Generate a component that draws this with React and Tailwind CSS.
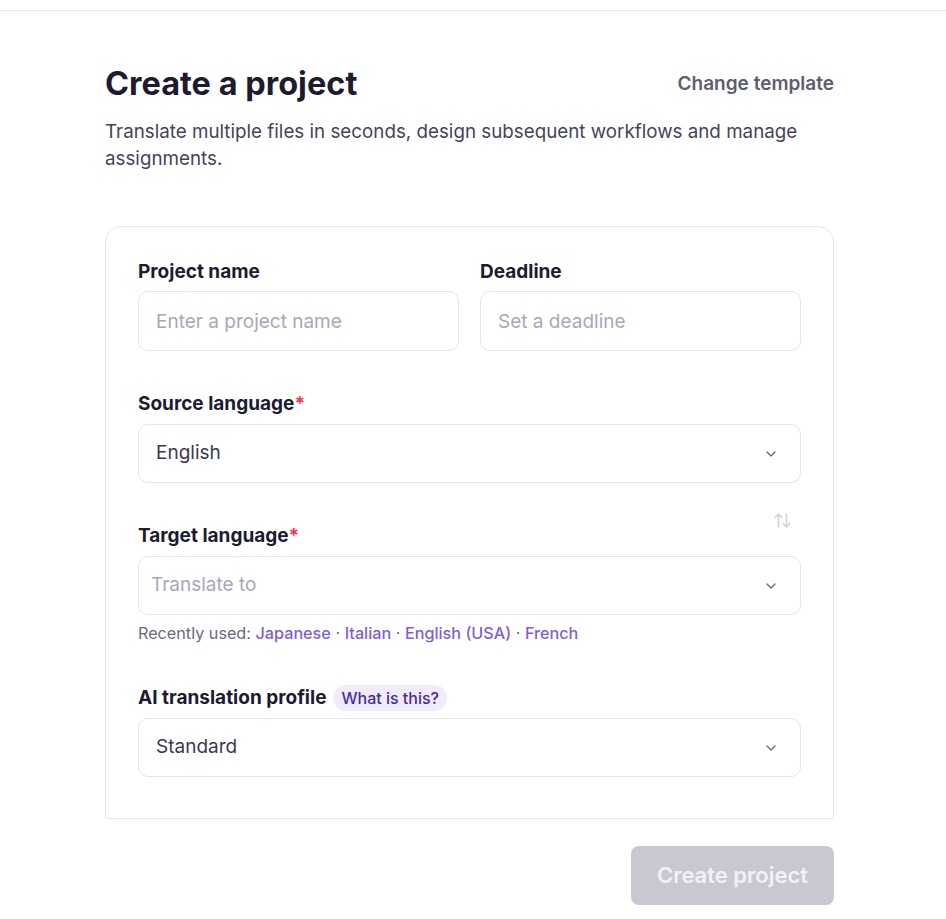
import { ChevronDown, ArrowUpDown } from 'lucide-react';

const recent = ['Japanese', 'Italian', 'English (USA)', 'French'];

function Label({ children, required, className = 'mb-[8px]' }) {
  return (
    <label className={`block text-[19px] leading-6 font-bold text-[#1d1b2f] ${className}`}>
      {children}
      {required && <span className="text-[#f0384f]">*</span>}
    </label>
  );
}

function TextInput({ placeholder }) {
  return (
    <input
      placeholder={placeholder}
      className="w-full h-[60px] px-[17px] rounded-[10px] border border-[#e4e4ea] bg-white text-[19px] text-[#3b3950] placeholder:text-[#a9a7b7] outline-none"
    />
  );
}

function Select({ value, placeholder, padLeft = 'pl-[17px]' }) {
  return (
    <div className={`flex items-center justify-between h-[59px] ${padLeft} pr-[21px] rounded-[10px] border border-[#e4e4ea] bg-white`}>
      <span className={`text-[19px] ${value ? 'text-[#3b3950]' : 'text-[#a9a7b7]'}`}>{value || placeholder}</span>
      <ChevronDown size={16} strokeWidth={2} className="text-[#6b6980]" />
    </div>
  );
}

export default function App() {
  return (
    <div className="min-h-screen bg-white" style={{ fontFamily: 'Inter, "Noto Sans", sans-serif' }}>
      <div className="h-[11px] border-b border-[#e8e8ec]" />

      <main className="w-[729px] ml-[105px] pt-[55px]">
        {/* heading */}
        <div className="flex items-center justify-between">
          <h1 className="text-[32.5px] leading-9 font-bold text-[#1d1b2f]">Create a project</h1>
          <button className="text-[19px] font-semibold text-[#5e5c71]">Change template</button>
        </div>
        <p className="mt-[16px] text-[18.8px] leading-[27px] text-[#46445a] pr-[20px]">
          Translate multiple files in seconds, design subsequent workflows and manage assignments.
        </p>

        {/* form card */}
        <div className="mt-[54px] border border-[#e8e8ec] rounded-t-2xl px-[32px] pt-[33px] pb-[41px]">
          <div className="grid grid-cols-2 gap-[21px]">
            <div>
              <Label className="mb-[7px]">Project name</Label>
              <TextInput placeholder="Enter a project name" />
            </div>
            <div>
              <Label className="mb-[7px]">Deadline</Label>
              <TextInput placeholder="Set a deadline" />
            </div>
          </div>

          <div className="mt-[41px]">
            <Label required>Source language</Label>
            <Select value="English" />
          </div>

          <div className="mt-[41px] relative">
            <button className="absolute right-[9px] -top-[13px] text-[#d3d2db]">
              <ArrowUpDown size={19} strokeWidth={2} />
            </button>
            <Label required>Target language</Label>
            <Select placeholder="Translate to" padLeft="pl-[12px]" />
            <p className="mt-[7px] text-[16.2px] leading-[22px] text-[#6b6980]">
              Recently used:{' '}
              {recent.map((lang, i) => (
                <span key={lang}>
                  <a className="text-[#7f5fd8] font-medium">{lang}</a>
                  {i < recent.length - 1 && ' · '}
                </span>
              ))}
            </p>
          </div>

          <div className="mt-[41px]">
            <div className="flex items-center gap-[7px] mb-[7px]">
              <span className="text-[19px] leading-6 font-bold text-[#1d1b2f]">AI translation profile</span>
              <span className="px-[8px] h-[26px] flex items-center rounded-full bg-[#f0ebfd] text-[16px] font-medium text-[#4a2a9c]">
                What is this?
              </span>
            </div>
            <Select value="Standard" />
          </div>
        </div>

        <div className="flex justify-end mt-[27px]">
          <button className="w-[203px] h-[59px] rounded-[8px] bg-[#c9c8d2] text-[22px] font-semibold text-[#f2f2f5]">
            Create project
          </button>
        </div>
      </main>
    </div>
  );
}
